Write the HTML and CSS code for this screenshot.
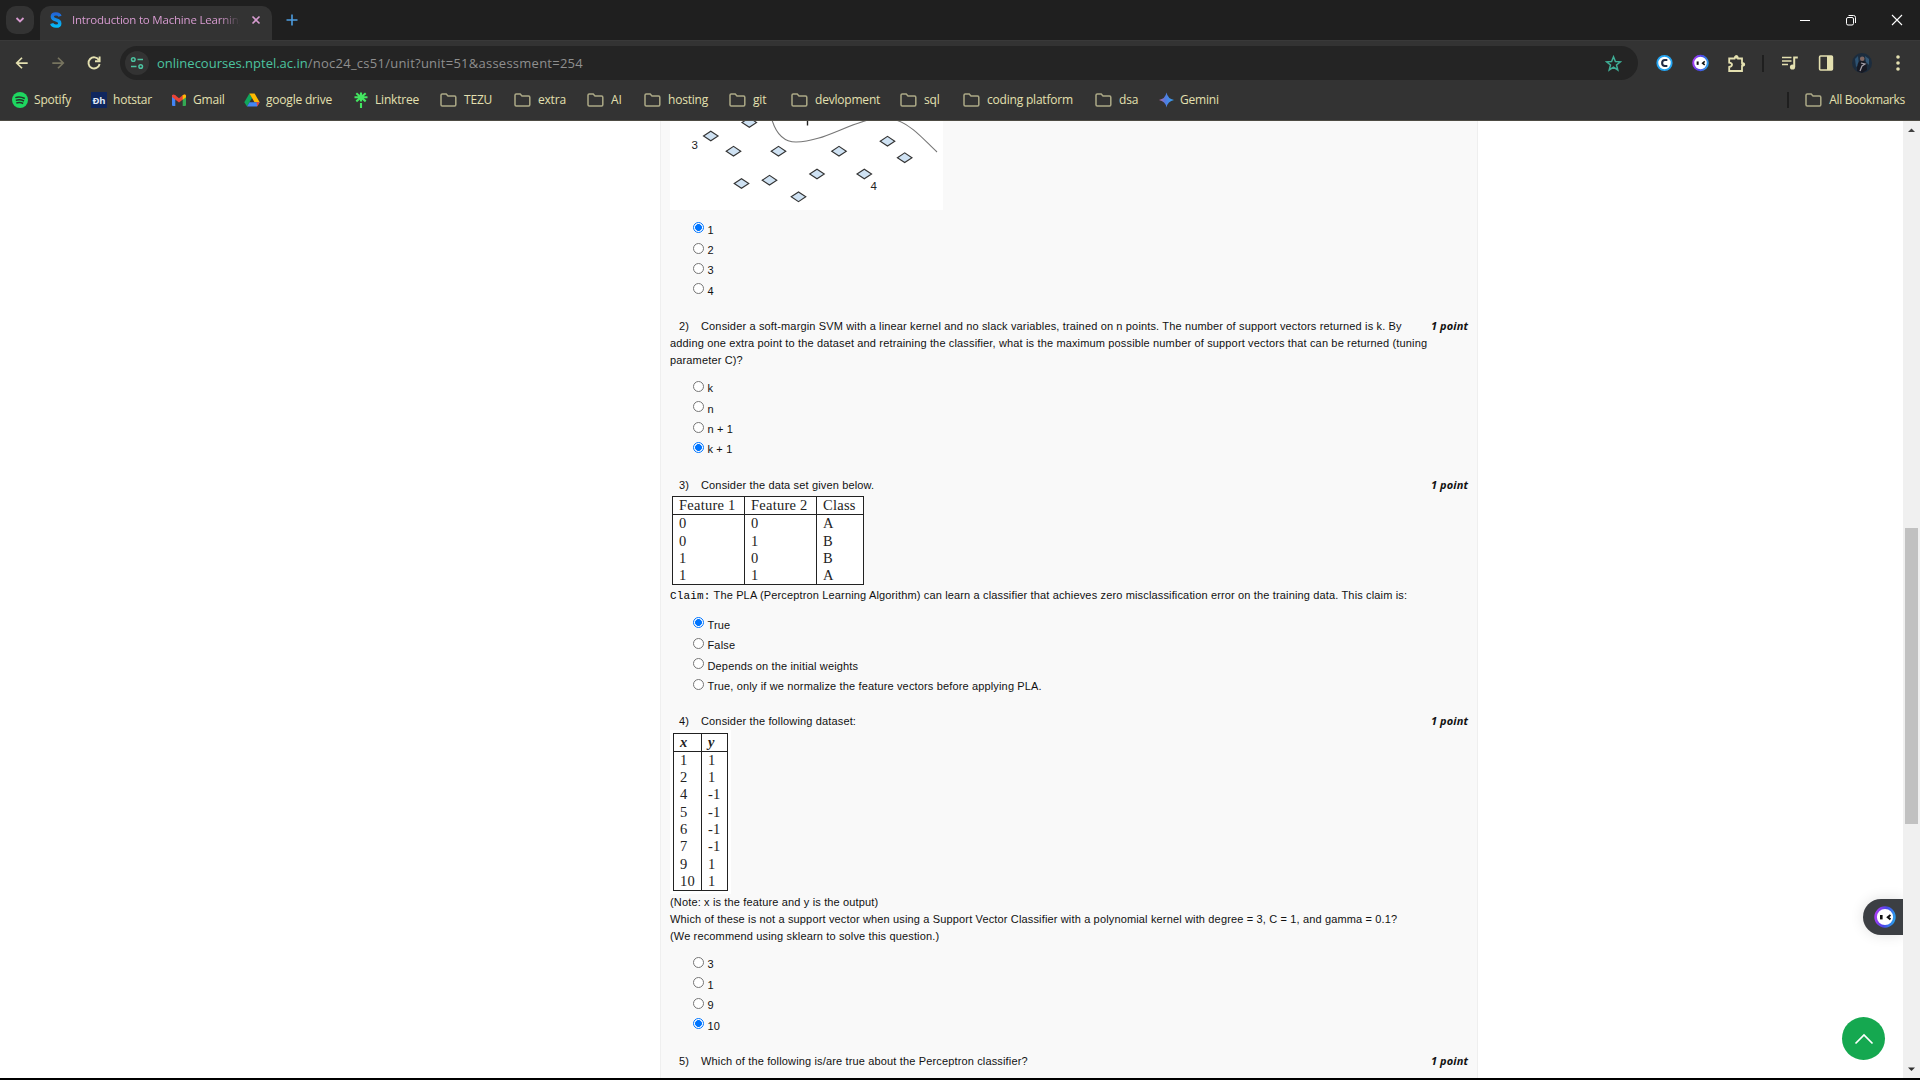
FILE: index.html
```html
<!DOCTYPE html>
<html lang="en">
<head>
<meta charset="utf-8">
<title>Introduction to Machine Learning</title>
<link rel="stylesheet" href="styles.css">
</head>
<body>
<svg class="defs" width="0" height="0">
  <symbol id="folder" viewBox="0 0 17 16"><path d="M1 12.8V3.2Q1 2 2.2 2H6.2L8 4H14.6Q15.8 4 15.8 5.2V12.8Q15.8 14 14.6 14H2.2Q1 14 1 12.8Z" fill="none" stroke="#aca986" stroke-width="1.5"/></symbol>
  <symbol id="bot" viewBox="0 0 22 22"><circle cx="11" cy="11" r="9.4" fill="#fff" stroke="url(#ring)" stroke-width="2.6"/><rect x="6" y="9" width="2.6" height="4.4" fill="#111"/><path d="M16.5 9L13.8 11.2L16.5 13.4" fill="none" stroke="#111" stroke-width="2"/></symbol>
  <defs><linearGradient id="ring" x1="0" y1="0.4" x2="1" y2="0.6"><stop offset="0" stop-color="#a43df5"/><stop offset=".5" stop-color="#4a45e8"/><stop offset="1" stop-color="#2b9bea"/></linearGradient>
  <linearGradient id="gem"><stop offset="0" stop-color="#c56a9f"/><stop offset=".4" stop-color="#5279e0"/><stop offset="1" stop-color="#35a5f0"/></linearGradient>
  <linearGradient id="ess" x1="0" y1="0" x2="0" y2="1"><stop offset="0" stop-color="#2166d8"/><stop offset="1" stop-color="#05b9f7"/></linearGradient></defs>
</svg>

<header class="browser">
  <div class="tabstrip">
    <div class="tabsearch"><svg width="12" height="12" viewBox="0 0 12 12"><path d="M2.5 4L6 7.5L9.5 4" fill="none" stroke="#d79bd0" stroke-width="1.8"/></svg></div>
    <div class="tab">
      <svg width="14" height="18" viewBox="0 0 14 18"><path d="M11 5.2Q10.300 2.800 7 2.800Q3.300 2.800 3.300 5.500Q3.300 8 7 8.8Q10.800 9.6 10.800 12.4Q10.800 15.200 7 15.200Q3.500 15.200 2.700 12.6" fill="none" stroke="url(#ess)" stroke-width="3.3"/></svg>
      <span class="tab-title">Introduction to Machine Learning</span>
      <svg class="tab-close" width="10" height="10" viewBox="0 0 10 10"><path d="M1.5 1.5L8.5 8.5M8.5 1.5L1.5 8.5" stroke="#d79bd0" stroke-width="1.6"/></svg>
    </div>
    <svg class="newtab" width="12" height="12" viewBox="0 0 12 12"><path d="M6 .5V11.5M.5 6H11.5" stroke="#4d9de0" stroke-width="1.6"/></svg>
    <div class="window-buttons">
      <svg viewBox="0 0 12 12"><path d="M1 6.5H11" stroke="#fff"/></svg>
      <svg viewBox="0 0 12 12"><rect x="1.5" y="3.5" width="7" height="7.5" rx="1.5" fill="none" stroke="#fff"/><path d="M3.5 1.5H8.5Q10.5 1.5 10.5 3.5V9" fill="none" stroke="#fff"/></svg>
      <svg viewBox="0 0 12 12"><path d="M1 1L11 11M11 1L1 11" stroke="#fff" stroke-width="1.1"/></svg>
    </div>
  </div>

  <div class="toolbar">
    <div class="btn"><svg width="14" height="14" viewBox="0 0 16 16"><path d="M14.5 8H2.5M8 2L2 8L8 14" fill="none" stroke="#e4e0b0" stroke-width="2"/></svg></div>
    <div class="btn"><svg width="14" height="14" viewBox="0 0 16 16"><path d="M1.5 8H13.5M8 2L14 8L8 14" fill="none" stroke="#77745f" stroke-width="2"/></svg></div>
    <div class="btn"><svg width="16" height="16" viewBox="0 0 16 16"><path d="M13 5.2A5.6 5.6 0 1 0 13.6 9" fill="none" stroke="#e4e0b0" stroke-width="1.9"/><path d="M13.6 1.5V6.2H9" fill="none" stroke="#e4e0b0" stroke-width="1.9"/></svg></div>
    <div class="omnibox">
      <div class="site"><svg width="14" height="14" viewBox="0 0 14 14" fill="none" stroke="#4cc3a0" stroke-width="1.5"><circle cx="3.3" cy="3.5" r="1.8"/><path d="M7.5 3.5H13M1 10.5H6.5"/><circle cx="10.7" cy="10.5" r="1.8"/></svg></div>
      <span class="url"><span class="domain">onlinecourses.nptel.ac.in</span><span class="path">/noc24_cs51/unit?unit=51&amp;assessment=254</span></span>
      <svg class="star" width="17" height="17" viewBox="0 0 17 17"><path d="M8.5 1.8L10.4 6.5L15.4 6.8L11.5 10L12.8 15L8.5 12.2L4.2 15L5.5 10L1.6 6.8L6.6 6.5Z" fill="none" stroke="#3fae96" stroke-width="1.5"/></svg>
    </div>
    <div class="btn"><svg width="17" height="18" viewBox="0 0 18 18"><circle cx="9" cy="9" r="7.6" fill="#fff" stroke="#23a4f2" stroke-width="2"/><path d="M12 5.8H9.4Q6.5 5.8 6.5 9Q6.5 12.2 9.4 12.2H12" fill="none" stroke="#222b45" stroke-width="2.2"/></svg></div>
    <div class="btn"><svg width="17" height="18"><use href="#bot"/></svg></div>
    <div class="btn"><svg width="19" height="19" viewBox="0 0 19 19"><path d="M2.2 4.5H7.5Q8 2.2 9.3 2.2Q10.7 2.2 11 4.5H15V9Q17.3 9.4 17.3 10.5Q17.3 11.6 15 12V17H2.2V13Q5 12.5 5 10.8Q5 9 2.2 8.7Z" fill="none" stroke="#e4e0b0" stroke-width="1.8"/><circle cx="9.3" cy="3" r="1.7" fill="#e4e0b0"/><circle cx="16.2" cy="10.5" r="1.7" fill="#e4e0b0"/></svg></div>
    <div class="divider"></div>
    <div class="btn"><svg width="18" height="16" viewBox="0 0 18 16"><path d="M1 2.5H10.5M1 6H10.5M1 9.5H7" stroke="#e4e0b0" stroke-width="1.7"/><circle cx="11.5" cy="12" r="2.6" fill="#e4e0b0"/><path d="M13.2 12V2.5H16.8" fill="none" stroke="#e4e0b0" stroke-width="2"/></svg></div>
    <div class="btn"><svg width="16" height="16" viewBox="0 0 16 16"><rect x="1.6" y="1" width="12.8" height="14" rx="1" fill="none" stroke="#e4e0b0" stroke-width="1.6"/><path d="M9 1H14.5V15H9Z" fill="#e4e0b0"/></svg></div>
    <div class="btn"><svg width="20" height="20" viewBox="0 0 20 20"><circle cx="10" cy="10" r="10" fill="#1c2c3d"/><path d="M3 6L6 3L7 12L4 14Z" fill="#2d5272"/><path d="M13 3L17 6V12L14 9Z" fill="#315573"/><path d="M5 18Q5 9 8 8L12 8Q15 9 15 17L10 20Z" fill="#171923"/><circle cx="10.2" cy="5.8" r="2.3" fill="#806762"/><path d="M9 10L13 11L10 13L8 18" fill="none" stroke="#a5a1aa" stroke-width="1.2"/></svg></div>
    <div class="btn"><svg width="4" height="18" viewBox="0 0 4 18" fill="#e4e0b0"><circle cx="2" cy="3" r="1.8"/><circle cx="2" cy="9" r="1.8"/><circle cx="2" cy="15" r="1.8"/></svg></div>
  </div>

  <nav class="bookmarks">
    <div><svg viewBox="0 0 16 16"><circle cx="8" cy="8" r="8" fill="#1ed760"/><path d="M3.3 5.6Q8 4 12.8 6.5M3.8 8.4Q8 7 12 9M4.3 11Q8 9.9 11.2 11.5" fill="none" stroke="#24362a" stroke-width="1.5"/></svg>Spotify</div>
    <div><svg viewBox="0 0 16 16"><rect width="16" height="16" fill="#10275e"/><text x="1.5" y="11.5" font-size="9.5" font-weight="700" fill="#dfe6f4" font-family="Open Sans,sans-serif">Ðh</text></svg>hotstar</div>
    <div><svg viewBox="0 0 16 16"><path d="M1 3H4.3V14H2Q1 14 1 13Z" fill="#4285f4"/><path d="M11.7 3H15V13Q15 14 14 14H11.7Z" fill="#34a853"/><path d="M1 5V3.6Q2 1.6 4 3L8 6.2L12 3Q14 1.6 15 3.6V5L8 10.4Z" fill="#ea4335"/><path d="M11.7 3.2Q14.5 1.5 15 4V5.3L11.7 7.7Z" fill="#fbbc04"/></svg>Gmail</div>
    <div><svg viewBox="0 0 16 16"><path d="M5.4 1.5L8 6L3 14.5L.3 10.3Z" fill="#11a65c"/><path d="M5.4 1.5H10.6L15.7 10.3H10.5Z" fill="#ffba00"/><path d="M5.5 10.3H15.7L13 14.5H3Z" fill="#4285f4"/><path d="M12.5 10.3H15.7L13.2 14.5Z" fill="#ea4335"/></svg>google drive</div>
    <div><svg viewBox="0 0 16 16"><path d="M8 .5V9.5M1.5 5.3H14.5M3.3 1.2L12.7 9.4M12.7 1.2L3.3 9.4M8 11V16" stroke="#43e660" stroke-width="2.1"/></svg>Linktree</div>
    <div class="dir"><svg><use href="#folder"/></svg>TEZU</div>
    <div class="dir"><svg><use href="#folder"/></svg>extra</div>
    <div class="dir"><svg><use href="#folder"/></svg>AI</div>
    <div class="dir"><svg><use href="#folder"/></svg>hosting</div>
    <div class="dir"><svg><use href="#folder"/></svg>git</div>
    <div class="dir"><svg><use href="#folder"/></svg>devlopment</div>
    <div class="dir"><svg><use href="#folder"/></svg>sql</div>
    <div class="dir"><svg><use href="#folder"/></svg>coding platform</div>
    <div class="dir"><svg><use href="#folder"/></svg>dsa</div>
    <div class="gemini"><svg viewBox="0 0 16 16"><path d="M7.5 .5Q8.700 6.800 15 8Q8.700 9.200 7.500 15.500Q6.300 9.200 0 8Q6.300 6.800 7.500 .5Z" fill="url(#gem)"/></svg>Gemini</div>
    <div class="dir all"><svg><use href="#folder"/></svg>All Bookmarks</div>
  </nav>
</header>

<div class="viewport">
  <main class="sheet">
    <svg class="figure" width="273" height="89" viewBox="0 0 273 89">
      <rect width="273" height="89" fill="#fff"/>
      <path d="M102 -1C106 12 114 21 126 21C150 21 172 6 198 -1M226 -1C242 4 254 19 267 31" fill="none" stroke="#777" stroke-width="1.1"/>
      <path d="M137.500 0V4.500" stroke="#222" stroke-width="1.400"/>
      <g fill="#cfe2f3" stroke="#333" stroke-width="1.100">
        <path d="M72 1.500l7.300-4.800l7.300 4.800l-7.300 4.800z"/><path d="M33.500 15l7.300-4.800l7.300 4.800l-7.300 4.800z"/><path d="M56.200 30.200l7.300-4.800l7.300 4.800l-7.300 4.800z"/><path d="M101.200 30.200l7.300-4.800l7.300 4.800l-7.300 4.800z"/><path d="M161.700 30.200l7.300-4.800l7.300 4.800l-7.300 4.800z"/><path d="M210.200 20.200l7.300-4.800l7.300 4.800l-7.300 4.800z"/><path d="M227.400 36.700l7.300-4.800l7.300 4.800l-7.300 4.800z"/><path d="M139.700 53l7.300-4.800l7.300 4.800l-7.300 4.800z"/><path d="M187 53l7.300-4.800l7.300 4.800l-7.300 4.800z"/><path d="M64.200 62.500l7.300-4.800l7.300 4.800l-7.300 4.800z"/><path d="M92.200 59.200l7.300-4.800l7.300 4.800l-7.300 4.800z"/><path d="M121.200 75.800l7.300-4.800l7.300 4.800l-7.300 4.800z"/>
      </g>
      <g font-family="Liberation Sans,sans-serif" font-size="11.500" fill="#222"><text x="21.500" y="28">3</text><text x="200.500" y="69">4</text></g>
    </svg>
    <ul class="options">
      <li><i class="radio on"></i><span>1</span></li><li><i class="radio"></i><span>2</span></li><li><i class="radio"></i><span>3</span></li><li><i class="radio"></i><span>4</span></li>
    </ul>

    <section class="question">
      <div class="head"><span class="num">2)</span><span>Consider a soft-margin SVM with a linear kernel and no slack variables, trained on n points. The number of support vectors returned is k. By</span><b class="points">1 point</b></div>
      <p>adding one extra point to the dataset and retraining the classifier, what is the maximum possible number of support vectors that can be returned (tuning</p>
      <p>parameter C)?</p>
    </section>
    <ul class="options">
      <li><i class="radio"></i><span>k</span></li><li><i class="radio"></i><span>n</span></li><li><i class="radio"></i><span>n + 1</span></li><li><i class="radio on"></i><span>k + 1</span></li>
    </ul>

    <section class="question perceptron">
      <div class="head"><span class="num">3)</span><span>Consider the data set given below.</span><b class="points">1 point</b></div>
      <div class="tex features">
        <div class="col"><span>Feature 1</span><span>0</span><span>0</span><span>1</span><span>1</span></div>
        <div class="col"><span>Feature 2</span><span>0</span><span>1</span><span>0</span><span>1</span></div>
        <div class="col"><span>Class</span><span>A</span><span>B</span><span>B</span><span>A</span></div>
      </div>
      <p><span class="claim">Claim:</span> The PLA (Perceptron Learning Algorithm) can learn a classifier that achieves zero misclassification error on the training data. This claim is:</p>
    </section>
    <ul class="options">
      <li><i class="radio on"></i><span>True</span></li><li><i class="radio"></i><span>False</span></li><li><i class="radio"></i><span>Depends on the initial weights</span></li><li><i class="radio"></i><span>True, only if we normalize the feature vectors before applying PLA.</span></li>
    </ul>

    <section class="question">
      <div class="head"><span class="num">4)</span><span>Consider the following dataset:</span><b class="points">1 point</b></div>
      <div class="tex-frame"><div class="tex xy">
        <div class="col"><span class="var">x</span><span>1</span><span>2</span><span>4</span><span>5</span><span>6</span><span>7</span><span>9</span><span>10</span></div>
        <div class="col"><span class="var">y</span><span>1</span><span>1</span><span>-1</span><span>-1</span><span>-1</span><span>-1</span><span>1</span><span>1</span></div>
      </div></div>
      <p>(Note: x is the feature and y is the output)</p>
      <p>Which of these is not a support vector when using a Support Vector Classifier with a polynomial kernel with degree = 3, C = 1, and gamma = 0.1?</p>
      <p>(We recommend using sklearn to solve this question.)</p>
    </section>
    <ul class="options">
      <li><i class="radio"></i><span>3</span></li><li><i class="radio"></i><span>1</span></li><li><i class="radio"></i><span>9</span></li><li><i class="radio on"></i><span>10</span></li>
    </ul>

    <section class="question last">
      <div class="head"><span class="num">5)</span><span>Which of the following is/are true about the Perceptron classifier?</span><b class="points">1 point</b></div>
    </section>
  </main>
  <div class="scrollbar">
    <svg width="17" height="17" viewBox="0 0 17 17"><path d="M5 11L8.500 7.500L12 11Z" fill="#404040"/></svg>
    <div class="thumb"></div>
    <svg width="17" height="17" viewBox="0 0 17 17"><path d="M5 6.500L8.500 10L12 6.500Z" fill="#303030"/></svg>
  </div>
  <div class="assistant"><svg width="22" height="22"><use href="#bot"/></svg></div>
  <div class="to-top"><svg width="20" height="12" viewBox="0 0 20 12"><path d="M1.500 10.500L10 2L18.500 10.500" fill="none" stroke="#fff" stroke-width="1.700"/></svg></div>
</div>
<div class="bottom-edge"></div>
</body>
</html>
```
FILE: styles.css
```css
* { box-sizing: border-box; }
body { margin: 0; width: 1920px; height: 1080px; overflow: hidden; background: #fff; font-family: "Open Sans", "Noto Sans", sans-serif; display: flex; flex-direction: column; }
.defs { position: absolute; }
svg { display: block; flex: none; }

.browser { height: 121px; flex: none; background: #333; border-bottom: 1px solid #4d4b43; }
.tabstrip { height: 40px; background: #1f1f1f; display: flex; align-items: flex-end; padding-left: 6px; }
.tabsearch { width: 28px; height: 28px; margin: 0 6px 6px 0; border-radius: 10px; background: #333; display: grid; place-items: center; }
.tab { width: 232px; height: 34px; border-radius: 10px 10px 0 0; background: #333; display: flex; align-items: center; padding: 0 11px 6px 9px; }
.tab-title { width: 168px; margin-left: 9px; overflow: hidden; white-space: nowrap; font-size: 11.5px; line-height: 20px; letter-spacing: -.2px; color: #d79bd0; -webkit-mask-image: linear-gradient(90deg, #000 88%, transparent); mask-image: linear-gradient(90deg, #000 88%, transparent); }
.tab-close { margin-left: auto; }
.newtab { margin: 0 0 14px 14px; }
.window-buttons { margin-left: auto; display: flex; height: 40px; align-items: center; }
.window-buttons svg { width: 12px; height: 12px; margin: 0 17px; }

.toolbar { height: 46px; display: flex; align-items: center; padding: 0 4px 1px; border-top: 1px solid #393939; }
.btn { width: 36px; display: grid; place-items: center; }
.divider { width: 2px; height: 17px; margin: 0 8px; background: #1f1f1f; }
.omnibox { flex: 1; height: 34px; margin: 0 8px; border-radius: 17px; background: #242424; display: flex; align-items: center; padding: 0 16px 0 5px; }
.site { width: 24px; height: 24px; border-radius: 50%; background: #333; display: grid; place-items: center; }
.url { margin-left: 8px; font-size: 13px; white-space: nowrap; }
.domain { color: #4cc3a0; }
.path { color: #8f8f8f; letter-spacing: .25px; }
.star { margin-left: auto; }

.bookmarks { height: 27px; display: grid; grid-template-columns: 79px 80px 73px 109px 87px 74px 73px 57px 85px 62px 109px 63px 132px 64px 1fr auto; padding: 0 15px 0 12px; font-size: 12px; letter-spacing: -.2px; color: #e4e0b0; white-space: nowrap; }
.bookmarks div { display: flex; align-items: center; gap: 6px; }
.bookmarks svg { width: 16px; height: 16px; }
.bookmarks .dir { gap: 7px; }
.bookmarks .dir svg { width: 17px; }
.bookmarks .gemini { gap: 5px; }
.bookmarks .all { position: relative; padding-left: 16px; letter-spacing: -.33px; }
.bookmarks .all::before { content: ""; position: absolute; left: -2px; top: 6px; width: 2px; height: 16px; background: #1f1f1f; }

.viewport { position: relative; height: 957px; overflow: hidden; background: #fff; display: flex; justify-content: space-between; }
.bottom-edge { height: 2px; background: #000; }
.sheet { width: 818px; height: 957px; margin-left: 660px; padding: 0 9px; background: #f9f9f9; border: 1px solid #efefef; border-width: 0 1px; font: 11px/17px "Liberation Sans", Arial, sans-serif; letter-spacing: .15px; color: #111; white-space: nowrap; }
.options { list-style: none; margin: 8px 0 18px 23px; padding: 0; height: 81.6px; }
.options li { height: 20.4px; display: flex; align-items: center; }
.options span { padding-top: 4px; }
.radio { width: 11px; height: 11px; margin: 0 3.5px 1px 0; border: 1px solid #767676; border-radius: 50%; background: #fff; }
.radio.on { border-color: #0075ff; background: radial-gradient(circle, #0075ff 3.1px, #fff 3.7px); }
.question p { margin: 0; }
.perceptron { padding-top: 1px; }
.last { padding-top: 1px; }
.head { display: flex; height: 17px; }
.num { width: 22px; margin-left: 9px; }
.points { margin-left: auto; font: italic 700 11px/16px "Open Sans", sans-serif; letter-spacing: .1px; }
.claim { font-family: "Liberation Mono", monospace; letter-spacing: .15px; color: #000; }

.tex { display: grid; background: #fff; border: 1px solid #222; font: 14.5px/17.4px "Liberation Serif", serif; letter-spacing: .25px; color: #222; }
.tex .col { display: flex; flex-direction: column; }
.tex .col + .col { border-left: 1px solid #222; }
.tex .col span { height: 17.4px; padding-left: 6px; }
.tex .col span:first-child { height: 18px; border-bottom: 1px solid #222; }
.features { grid-template-columns: 71px 72px auto; width: 192px; height: 89px; margin: 2px 0 2px 2px; }
.tex-frame { width: 61px; height: 164px; padding: 3px; background: #fff; }
.xy { grid-template-columns: 27px auto; width: 55px; height: 158px; line-height: 17.2px; }
.xy .col span { height: 17.3px; }
.tex .col .var { font-style: italic; font-weight: 700; line-height: 17px; }

.scrollbar { width: 17px; height: 957px; background: #f0f0f0; display: flex; flex-direction: column; align-items: center; }
.thumb { width: 13px; height: 296px; margin: 390px 0 auto; background: #c1c1c1; }
.assistant { position: absolute; left: 1863px; top: 778px; width: 40px; height: 36px; border-radius: 18px 0 0 18px; background: #3c3f43; box-shadow: 0 0 14px rgba(0,0,0,.12); clip-path: inset(-20px 0 -20px -20px); display: flex; align-items: center; padding-left: 11px; }
.to-top { position: absolute; left: 1842px; top: 896px; width: 43px; height: 43px; border-radius: 50%; background: #15a850; display: grid; place-items: center; }
```
